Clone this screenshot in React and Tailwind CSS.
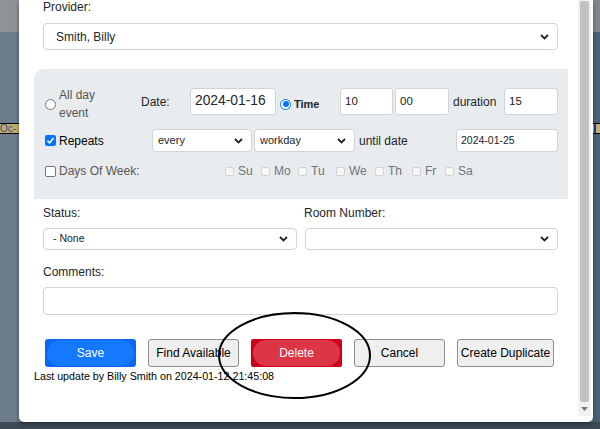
import React from "react";

function Chevron() {
  return (
    <svg width="9" height="6" viewBox="0 0 9 6" className="shrink-0">
      <path d="M1 1 L4.5 4.5 L8 1" fill="none" stroke="#222" strokeWidth="1.8" />
    </svg>
  );
}

function Select({ value, className, textClass }) {
  return (
    <div
      className={`flex items-center justify-between rounded-[4px] border border-[#ced4da] bg-white pr-[8px] ${className}`}
    >
      <span className={`text-[#212529] ${textClass}`}>{value}</span>
      <Chevron />
    </div>
  );
}

function Field({ value, className, textClass = "text-[11.5px]" }) {
  return (
    <div
      className={`flex items-center rounded-[3px] border border-[#ced4da] bg-white pl-[4px] text-[#212529] ${className} ${textClass}`}
    >
      {value}
    </div>
  );
}

function Radio({ checked }) {
  return checked ? (
    <span className="flex h-[11px] w-[11px] shrink-0 items-center justify-center rounded-full border-[1.5px] border-[#0075ff] bg-white">
      <span className="h-[6px] w-[6px] rounded-full bg-[#0075ff]" />
    </span>
  ) : (
    <span className="h-[11px] w-[11px] shrink-0 rounded-full border border-[#767676] bg-white" />
  );
}

function Check({ checked }) {
  return checked ? (
    <span className="flex h-[11px] w-[11px] shrink-0 items-center justify-center rounded-[2px] bg-[#0075ff]">
      <svg width="9" height="9" viewBox="0 0 9 9">
        <path d="M1.5 4.8 L3.6 6.8 L7.6 2" fill="none" stroke="#fff" strokeWidth="1.6" />
      </svg>
    </span>
  ) : (
    <span className="h-[11px] w-[11px] shrink-0 rounded-[2px] border border-[#767676] bg-white" />
  );
}

const days = [
  { d: "Su", w: "w-[36px]" },
  { d: "Mo", w: "w-[37px]" },
  { d: "Tu", w: "w-[38px]" },
  { d: "We", w: "w-[39px]" },
  { d: "Th", w: "w-[37px]" },
  { d: "Fr", w: "w-[33px]" },
  { d: "Sa", w: "w-[30px]" },
];

function GrayButton({ children, className = "" }) {
  return (
    <button
      className={`h-[28px] rounded-[3px] border border-[#8f8f8f] bg-[#efefef] text-[12px] text-black ${className}`}
    >
      {children}
    </button>
  );
}

export default function App() {
  return (
    <div className="relative h-[429px] w-[600px] overflow-hidden bg-[#6d7c8b] font-['Liberation_Sans',Arial,sans-serif]">
      {/* page behind the dialog */}
      <div className="flex h-full">
        <div className="flex w-[19px] flex-col">
          <div className="h-[32px] bg-[#8e9398]" />
          <div className="h-[91px] bg-[#6d7c8b]" />
          <div className="flex h-[11px] items-center overflow-hidden border-y border-black bg-[#c2b06c] text-[10px] leading-none text-[#2a4a8a]">
            Oc-
          </div>
          <div className="flex-1 bg-[#6d7c8b]" />
          <div className="h-[7px] bg-[#3d4955]" />
        </div>
        <div className="flex flex-1 flex-col">
          <div className="flex-1" />
          <div className="h-[7px] bg-[#3d4955]" />
        </div>
        <div className="flex w-[7px] flex-col">
          <div className="h-[32px] bg-[#80868c]" />
          <div className="h-[91px] bg-[#4c6075]" />
          <div className="h-[11px] border-y border-black bg-[#c2b06c]">
            <div className="ml-[1px] h-full w-[2px] bg-[#1c3c8c]" />
          </div>
          <div className="flex-1 bg-[#4c6075]" />
          <div className="h-[7px] bg-[#3d4955]" />
        </div>
      </div>

      {/* dialog */}
      <div className="absolute left-[19px] top-0 flex h-[422px] w-[574px] rounded-b-[5px] bg-white shadow-[0_2px_4px_rgba(0,0,0,0.4)]">
        <div className="relative flex-1 text-[12px] text-[#212529]">
          <div className="pl-[24px] pr-[20px]">
            <div className="h-[15px] leading-[15px]">Provider:</div>
            <Select
              value="Smith, Billy"
              className="mt-[8px] h-[27px] pl-[12px]"
              textClass="text-[12px]"
            />
          </div>

          {/* repeat panel */}
          <div className="ml-[15px] mr-[10px] mt-[19px] h-[130px] rounded-tl-[10px] bg-[#e9ecef] pl-[11px] pt-[19px]">
            <div className="flex h-[27px] items-center">
              <div className="mt-[5px] flex items-center">
                <Radio />
                <div className="ml-[3px] w-[82px] leading-[18px] text-[#555]">
                  All day
                  <br />
                  event
                </div>
              </div>
              <div className="w-[49px]">Date:</div>
              <Field value="2024-01-16" className="h-[27px] w-[86px]" textClass="text-[13.8px]" />
              <div className="ml-[4px] mt-[5px] flex items-center">
                <Radio checked />
                <span className="ml-[3px] w-[46px] text-[11px] font-bold">Time</span>
              </div>
              <Field value="10" className="h-[27px] w-[53px]" />
              <Field value="00" className="ml-[2px] h-[27px] w-[54px]" />
              <div className="ml-[4px] w-[51px]">duration</div>
              <Field value="15" className="h-[27px] w-[54px]" />
            </div>

            <div className="mt-[14px] flex h-[23px] items-center">
              <Check checked />
              <span className="ml-[3px] w-[93px] text-black">Repeats</span>
              <Select value="every" className="h-[23px] w-[100px] pl-[5px]" textClass="text-[11px]" />
              <Select value="workday" className="ml-[2px] h-[23px] w-[101px] pl-[5px]" textClass="text-[11px]" />
              <span className="ml-[4px] w-[97px]">until date</span>
              <Field value="2024-01-25" className="h-[23px] w-[102px]" textClass="text-[10.5px]" />
            </div>

            <div className="mt-[12px] flex h-[14px] items-center">
              <Check />
              <span className="ml-[3px] w-[166px] text-[#555]">Days Of Week:</span>
              {days.map((x) => (
                <div key={x.d} className={`flex items-center ${x.w}`}>
                  <span className="h-[9px] w-[9px] rounded-[2px] border border-[#d2d2d2] bg-[#f7f7f7]" />
                  <span className="ml-[4px] text-[#6c757d]">{x.d}</span>
                </div>
              ))}
            </div>
          </div>

          <div className="grid grid-cols-2 gap-x-[7px] pl-[24px] pr-[20px]">
            <div>
              <div className="mt-[7px] h-[14px] leading-[14px]">Status:</div>
              <Select value="- None" className="mt-[8px] h-[22px] pl-[9px]" textClass="text-[10.5px]" />
            </div>
            <div>
              <div className="mt-[7px] h-[14px] leading-[14px]">Room Number:</div>
              <Select value="" className="ml-[1px] mt-[8px] h-[22px]" textClass="" />
            </div>
          </div>

          <div className="pl-[24px] pr-[20px]">
            <div className="mt-[15px] h-[14px] leading-[14px]">Comments:</div>
            <div className="mt-[8px] h-[28px] rounded-[4px] border border-[#ced4da]" />
          </div>

          <div className="ml-[26px] mt-[24px] flex gap-[12px]">
            <button className="relative h-[28px] w-[91px] overflow-hidden rounded-[3px] bg-[#0b67f0] text-[12px] text-white">
              <span className="absolute inset-x-[2px] inset-y-[1px] rounded-full bg-[#1479ff]" />
              <span className="relative">Save</span>
            </button>
            <GrayButton className="w-[91px]">Find Available</GrayButton>
            <button className="relative h-[28px] w-[91px] overflow-hidden rounded-[2px] bg-[#d0001a] text-[12px] text-white">
              <span className="absolute inset-x-[2px] inset-y-[1px] rounded-full bg-[#dc3545]" />
              <span className="relative">Delete</span>
            </button>
            <GrayButton className="w-[91px]">Cancel</GrayButton>
            <GrayButton className="w-[97px] text-[11.5px]">Create Duplicate</GrayButton>
          </div>

          <div className="ml-[15px] mt-[3px] h-[13px] text-[10.7px] leading-[13px] text-black">
            Last update by Billy Smith on 2024-01-12 21:45:08
          </div>

          <svg
            className="pointer-events-none absolute left-0 top-0"
            width="558"
            height="422"
          >
            <ellipse
              cx="275.5"
              cy="355.5"
              rx="75.5"
              ry="42.5"
              fill="none"
              stroke="#000"
              strokeWidth="2"
            />
          </svg>
        </div>

        {/* scrollbar */}
        <div className="mb-[6px] mr-[2px] flex w-[13px] flex-col bg-[#f1f1f1]">
          <div className="mx-[2px] mt-[1px] flex-1 rounded-[2px] bg-[#c1c1c1]" />
          <div className="flex h-[14px] items-center justify-center">
            <svg width="7" height="4" viewBox="0 0 7 4">
              <path d="M0 0 L7 0 L3.5 4 Z" fill="#777" />
            </svg>
          </div>
        </div>
      </div>
    </div>
  );
}
